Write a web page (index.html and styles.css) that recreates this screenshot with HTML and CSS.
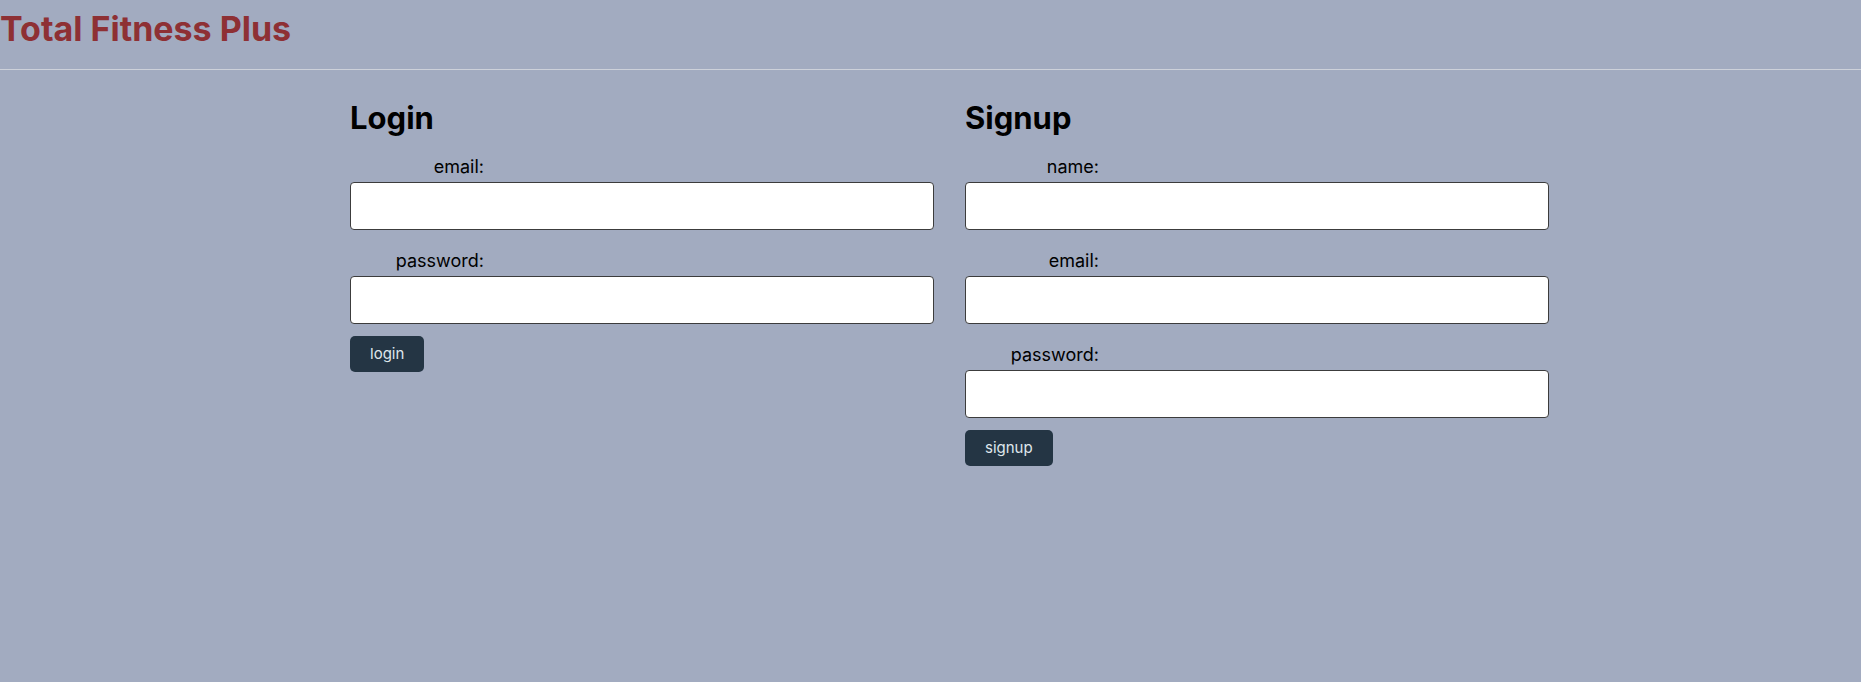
FILE: index.html
```html
<!DOCTYPE html>
<html lang="en">
<head>
<meta charset="utf-8">
<title>Total Fitness Plus</title>
<link rel="stylesheet" href="styles.css">
</head>
<body>
<header class="site-header">
  <h1 class="brand">Total Fitness Plus</h1>
</header>
<main class="auth">
  <section class="panel">
    <h2 class="panel-title">Login</h2>
    <form class="auth-form">
      <div class="field">
        <label class="field-label" for="login-email">email:</label>
        <input class="field-input" id="login-email" type="text">
      </div>
      <div class="field">
        <label class="field-label" for="login-password">password:</label>
        <input class="field-input" id="login-password" type="password">
      </div>
      <button class="btn" type="button">login</button>
    </form>
  </section>
  <section class="panel">
    <h2 class="panel-title">Signup</h2>
    <form class="auth-form">
      <div class="field">
        <label class="field-label" for="signup-name">name:</label>
        <input class="field-input" id="signup-name" type="text">
      </div>
      <div class="field">
        <label class="field-label" for="signup-email">email:</label>
        <input class="field-input" id="signup-email" type="text">
      </div>
      <div class="field">
        <label class="field-label" for="signup-password">password:</label>
        <input class="field-input" id="signup-password" type="password">
      </div>
      <button class="btn" type="button">signup</button>
    </form>
  </section>
</main>
</body>
</html>
```
FILE: styles.css
```css
html, body {
  margin: 0;
  padding: 0;
}
body {
  background: #a2abc0;
  font-family: Inter, "Liberation Sans", sans-serif;
  color: #000;
  min-height: 682px;
}
.site-header {
  padding: 8px 0 20px 0;
  border-bottom: 1px solid #cdd1da;
}
.brand {
  margin: 0;
  font-size: 34px;
  line-height: 41px;
  font-weight: 700;
  color: #8e3034;
}
.auth {
  display: grid;
  grid-template-columns: 584px 584px;
  column-gap: 31px;
  padding: 29px 0 0 350px;
}
.panel-title {
  margin: 0 0 20px 0;
  font-size: 31px;
  line-height: 37px;
  font-weight: 700;
}
.auth-form {
  display: flex;
  flex-direction: column;
  align-items: flex-start;
}
.field {
  display: flex;
  flex-direction: column;
  width: 100%;
}
.field + .field {
  margin-top: 20px;
}
.field-label {
  width: 134px;
  text-align: right;
  font-size: 18px;
  line-height: 22px;
  margin-bottom: 4px;
}
.field-input {
  box-sizing: border-box;
  width: 584px;
  height: 48px;
  margin: 0;
  border: 1px solid #3c3c3c;
  border-radius: 4px;
  background: #fff;
  font-family: inherit;
  font-size: 16px;
  padding: 0 10px;
}
.btn {
  margin-top: 12px;
  height: 36px;
  padding: 0 20px;
  border: none;
  border-radius: 5px;
  background: #243544;
  color: #dfe7ec;
  font-family: inherit;
  font-size: 15px;
  line-height: 36px;
  cursor: pointer;
}
```
